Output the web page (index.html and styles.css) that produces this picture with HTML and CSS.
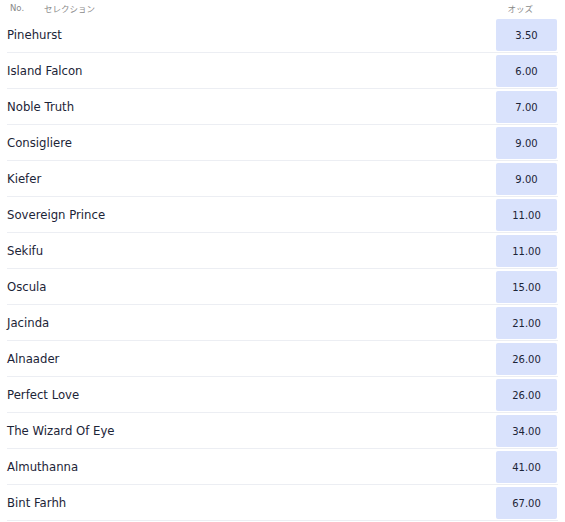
FILE: index.html
```html
<!DOCTYPE html>
<html lang="ja">
<head>
<meta charset="utf-8">
<link rel="stylesheet" href="styles.css">
</head>
<body>
<div class="board">
  <div class="head">
    <span class="h-no">No.</span>
    <span class="h-sel">セレクション</span>
    <span class="h-odds">オッズ</span>
  </div>
  <div class="row"><span class="name">Pinehurst</span><span class="odds">3.50</span></div>
  <div class="row"><span class="name">Island Falcon</span><span class="odds">6.00</span></div>
  <div class="row"><span class="name">Noble Truth</span><span class="odds">7.00</span></div>
  <div class="row"><span class="name">Consigliere</span><span class="odds">9.00</span></div>
  <div class="row"><span class="name">Kiefer</span><span class="odds">9.00</span></div>
  <div class="row"><span class="name">Sovereign Prince</span><span class="odds">11.00</span></div>
  <div class="row"><span class="name">Sekifu</span><span class="odds">11.00</span></div>
  <div class="row"><span class="name">Oscula</span><span class="odds">15.00</span></div>
  <div class="row"><span class="name">Jacinda</span><span class="odds">21.00</span></div>
  <div class="row"><span class="name">Alnaader</span><span class="odds">26.00</span></div>
  <div class="row"><span class="name">Perfect Love</span><span class="odds">26.00</span></div>
  <div class="row"><span class="name">The Wizard Of Eye</span><span class="odds">34.00</span></div>
  <div class="row"><span class="name">Almuthanna</span><span class="odds">41.00</span></div>
  <div class="row"><span class="name">Bint Farhh</span><span class="odds">67.00</span></div>
</div>
</body>
</html>
```

FILE: styles.css
```css
html, body {
  margin: 0;
  padding: 0;
  background: #ffffff;
}
.board {
  width: 551px;
  margin-left: 7px;
  font-family: "DejaVu Sans", Verdana, "Noto Sans CJK JP", sans-serif;
  color: #1c2437;
}
.head {
  display: flex;
  align-items: center;
  height: 15px;
  padding-bottom: 2px;
  font-size: 8.5px;
  color: #8a8a8a;
  font-family: "DejaVu Sans", "Noto Sans CJK JP", sans-serif;
}
.h-no {
  margin-left: 3px;
  width: 34px;
}
.h-sel {
  flex: 1;
}
.h-odds {
  margin-right: 25px;
}
.row {
  display: flex;
  align-items: center;
  justify-content: space-between;
  height: 35px;
  border-bottom: 1px solid #eceef3;
}
.name {
  font-size: 11.7px;
}
.odds {
  display: flex;
  align-items: center;
  justify-content: center;
  width: 61px;
  height: 32px;
  margin-top: 1px;
  margin-right: 1px;
  background: #d9e2fc;
  border-radius: 2px;
  font-size: 10px;
  color: #1c2437;
}
```
